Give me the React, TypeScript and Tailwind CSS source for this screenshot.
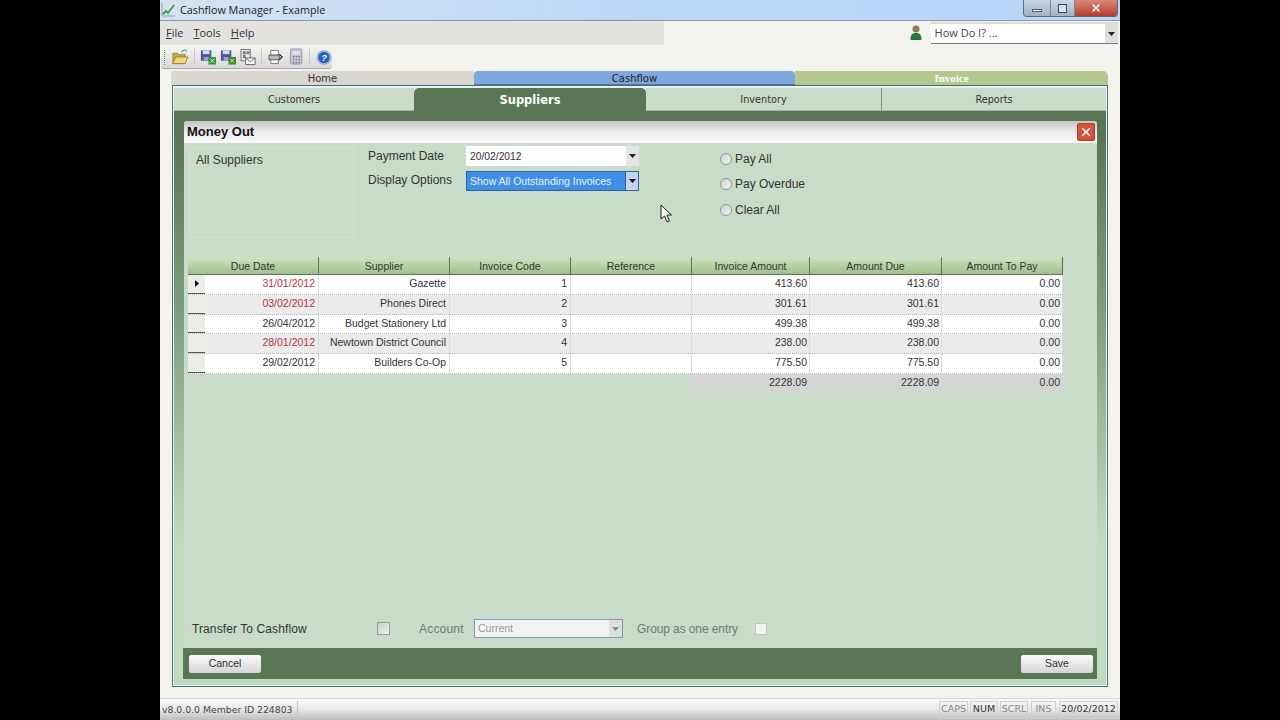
import { X } from "lucide-react";

const rows = [
  { due: "31/01/2012", late: true, supplier: "Gazette", code: "1", amount: "413.60" },
  { due: "03/02/2012", late: true, supplier: "Phones Direct", code: "2", amount: "301.61" },
  { due: "26/04/2012", late: false, supplier: "Budget Stationery Ltd", code: "3", amount: "499.38" },
  { due: "28/01/2012", late: true, supplier: "Newtown District Council", code: "4", amount: "238.00" },
  { due: "29/02/2012", late: false, supplier: "Builders Co-Op", code: "5", amount: "775.50" },
];

const headers = [
  { label: "Due Date", w: "w-[131px]" },
  { label: "Supplier", w: "w-[131px]" },
  { label: "Invoice Code", w: "w-[121px]" },
  { label: "Reference", w: "w-[121px]" },
  { label: "Invoice Amount", w: "w-[118px]" },
  { label: "Amount Due", w: "w-[132px]" },
  { label: "Amount To Pay", w: "w-[121px]" },
];

function Caret({ color = "#222" }: { color?: string }) {
  return (
    <svg width="7" height="4" viewBox="0 0 7 4">
      <path d="M0 0h7L3.5 4z" fill={color} />
    </svg>
  );
}

function Cell({ w, children, tone = "text-[#333]", pad = "pr-[2px]" }: { w: string; children?: React.ReactNode; tone?: string; pad?: string }) {
  return (
    <div className={`${w} ${pad} h-full shrink-0 border-r border-[#dcdcdc] pb-[1px] flex items-center justify-end text-[10.5px] ${tone}`}>
      {children}
    </div>
  );
}

function ToolbarIcons() {
  return (
    <>
      <svg width="20" height="18" viewBox="0 0 20 18" className="ml-[6px]">
        <path d="M2 5h5l1.500 1.500H15V16H2z" fill="#c9a94a" stroke="#8a7430" strokeWidth=".8" />
        <path d="M2 16l3-7h13l-3 7z" fill="#f0d57c" stroke="#8a7430" strokeWidth=".8" />
        <path d="M11 4c2-3 4-3 6-1" fill="none" stroke="#5a7fb0" strokeWidth="1.200" />
      </svg>
      <div className="w-px h-[18px] bg-[#c8c8c8] mx-[4px]" />
      {["#2f9a3c", "#3c8a2c"].map((c, i) => (
        <svg key={c} width="18" height="18" viewBox="0 0 18 18" className={i ? "ml-[3px]" : "ml-[1px]"}>
          <path d="M1 2h11v11H1z" fill="#50559a" />
          <path d="M3 2h7v4H3z" fill="#d8dcec" />
          <path d="M4 9h5v4H4z" fill="#9ea3c8" />
          <path d="M9 9h8v8H9z" fill={c} />
          <path d="M11 11l4 4M15 11l-4 4" stroke="#d8f0c8" strokeWidth="1" />
        </svg>
      ))}
      <svg width="17" height="18" viewBox="0 0 17 18" className="ml-[3px]">
        <path d="M1 1h10v12H1z" fill="#e8e8e4" stroke="#555" strokeWidth=".8" />
        <path d="M3 3h3v3H3zM7 3h3v3H7zM3 7h3v3H3z" fill="#777" />
        <path d="M6 10h10v7H6z" fill="#fff" stroke="#444" strokeWidth=".8" />
        <path d="M6 10l5 4 5-4" fill="none" stroke="#444" strokeWidth=".8" />
      </svg>
      <div className="w-px h-[18px] bg-[#c8c8c8] mx-[5px]" />
      <svg width="16" height="16" viewBox="0 0 16 16" className="ml-[1px]">
        <path d="M3 1h8v5H3z" fill="#fff" stroke="#555" strokeWidth=".8" />
        <path d="M1 6h11v5H1z" fill="#b8b8b8" stroke="#444" strokeWidth=".8" />
        <path d="M3 11h8v4H3z" fill="#fff" stroke="#555" strokeWidth=".8" />
        <path d="M12 5l3 3-3 3" fill="none" stroke="#222" strokeWidth="1.200" />
      </svg>
      <svg width="14" height="18" viewBox="0 0 14 18" className="ml-[7px]">
        <rect x=".5" y=".5" width="12" height="16" rx="1.500" fill="#c4cbd6" stroke="#8d96a6" />
        <path d="M3 3h7v3H3z" fill="#e6eaf0" />
        <path d="M3 8h1.500v1.500H3zM6 8h1.500v1.500H6zM9 8h1.500v1.500H9zM3 11h1.500v1.500H3zM6 11h1.500v1.500H6zM9 11h1.500v1.500H9zM3 14h1.500v1.500H3zM6 14h1.500v1.500H6zM9 14h1.500v1.500H9z" fill="#69717f" />
      </svg>
      <div className="w-px h-[18px] bg-[#c8c8c8] mx-[6px]" />
      <svg width="17" height="17" viewBox="0 0 17 17">
        <circle cx="8.500" cy="8.500" r="8" fill="#9fb6da" />
        <circle cx="8.500" cy="8.500" r="6" fill="#2a62c2" />
        <text x="8.500" y="12" textAnchor="middle" fontSize="10" fontWeight="700" fontStyle="italic" fill="#fff" fontFamily="Liberation Sans, sans-serif">?</text>
      </svg>
    </>
  );
}

export default function App() {
  return (
    <div className="w-[1280px] h-[720px] bg-black flex justify-center overflow-hidden relative font-['Liberation_Sans',sans-serif]">
      <div className="w-[960px] h-[720px] bg-[#f3f3ee] flex flex-col">
        {/* title bar */}
        <div className="h-[21px] shrink-0 bg-gradient-to-r from-[#d3e3f3] via-[#bcd8f8] to-[#b7d5f8] border-b border-[#8b98a5] flex items-center relative">
          <svg width="15" height="15" viewBox="0 0 15 15" className="ml-[1px] mb-[2px]">
            <path d="M1 1v13h13" fill="none" stroke="#9aa09a" strokeWidth="1" />
            <path d="M2 12l3-3 2 2 6-8" fill="none" stroke="#3d9a3d" strokeWidth="1.800" />
          </svg>
          <span className="ml-[4px] text-[10.8px] text-[#222] font-['Open_Sans',sans-serif]">Cashflow Manager - Example</span>
          <div className="absolute right-[2px] top-0 h-[17px] w-[95px] flex border border-t-0 border-[#5f6a75] rounded-b-[4px] overflow-hidden">
            <div className="w-[26px] bg-gradient-to-b from-[#c8d8e8] to-[#9db0c4] flex items-center justify-center">
              <div className="w-[10px] h-[3px] border border-[#555] bg-white mt-[5px]" />
            </div>
            <div className="w-[25px] border-x border-[#7c8894] bg-gradient-to-b from-[#c8d8e8] to-[#9db0c4] flex items-center justify-center">
              <div className="w-[9px] h-[9px] border border-[#444] bg-[#d8e2ec]" />
            </div>
            <div className="flex-1 bg-gradient-to-b from-[#d88878] to-[#b8382c] flex items-center justify-center">
              <X size={12} strokeWidth={3.500} className="text-[#f4f4f4]" />
            </div>
          </div>
        </div>

        {/* menu strip */}
        <div className="h-[24px] shrink-0 flex items-center">
          <div className="w-[505px] h-full bg-[#e2e2e0] flex items-center gap-[10px] pl-[6px] text-[11px] text-[#333] font-['Open_Sans',sans-serif]">
            <span><u>F</u>ile</span>
            <span><u>T</u>ools</span>
            <span><u>H</u>elp</span>
          </div>
          <svg width="12" height="16" viewBox="0 0 12 16" className="ml-[246px]">
            <circle cx="6" cy="4" r="3.500" fill="#8a7a60" />
            <path d="M0.500 15c0-6 2-7 5.500-7s5.500 1 5.500 7z" fill="#217a3c" />
          </svg>
          <div className="ml-[9px] w-[188px] h-[22px] bg-white border-t-2 border-[#dcdcdc] border-b border-b-[#777] flex items-center justify-between text-[11px] text-[#444] font-['Open_Sans',sans-serif]">
            <span className="pl-[4px]">How Do I? ...</span>
            <div className="w-[13px] h-full bg-[#dedede] flex items-center justify-center"><Caret /></div>
          </div>
          <div className="w-[2px]" />
        </div>

        {/* toolbar */}
        <div className="h-[26px] shrink-0 flex items-start">
          <div className="w-[171px] h-[24px] ml-[1px] pt-[1px] rounded-b-[3px] bg-gradient-to-b from-[#f5f5f0] to-[#d8d8d8] border-b border-[#a8a8a8] flex items-center pl-[3px]">
            <div className="w-px h-[15px] border-l border-dotted border-[#777]" />
            <ToolbarIcons />
          </div>
        </div>

        {/* top tabs */}
        <div className="h-[14px] shrink-0 ml-[11px] w-[937px] flex text-[10px] leading-[13px] text-center font-['DejaVu_Sans',sans-serif]">
          <div className="w-[303px] pt-[1px] bg-[#d9d5cf] rounded-tl-[4px] text-[#333]">Home</div>
          <div className="w-[321px] pt-[1px] bg-[#7ea8dd] rounded-t-[4px] border-b border-[#50739f] text-[#222]">Cashflow</div>
          <div className="w-[313px] bg-[#b4c78f] rounded-tr-[5px] text-white font-bold font-['Liberation_Serif',serif] text-[11px] leading-[14px]">Invoice</div>
        </div>

        {/* main panel */}
        <div className="h-[602px] shrink-0 ml-[12px] w-[936px] bg-[#e4f0f4] border border-[#4f6f78] p-[1px] flex flex-col">
          <div className="h-[23px] shrink-0 mt-[1px] flex text-[9.7px] text-[#333] font-['DejaVu_Sans',sans-serif]">
            <div className="w-[240px] pt-[3px] bg-[#c9dbc9] border-b border-[#9fb8b0] flex items-center justify-center">Customers</div>
            <div className="w-[232px] pt-[2px] bg-[#5a7755] rounded-t-[5px] flex items-center justify-center text-white font-bold text-[11.5px]">Suppliers</div>
            <div className="w-[236px] pt-[3px] bg-[#c9dbc9] border-b border-[#9fb8b0] border-r border-r-[#7e9a88] flex items-center justify-center">Inventory</div>
            <div className="flex-1 pt-[3px] bg-[#c9dbc9] border-b border-[#9fb8b0] flex items-center justify-center">Reports</div>
          </div>

          <div className="flex-1 bg-gradient-to-b from-[#5a7755] from-[5%] via-[#7f9c7c] via-[35%] to-[#bfdcbf] to-[75%] pl-[10px] pr-[9px] pt-[10px] pb-[6px] flex flex-col">
            <div className="h-[22px] shrink-0 rounded-t-[2px] bg-gradient-to-b from-[#c3c3c8] via-[#ececee] to-[#fafafa] flex items-center justify-between pl-[3px] pr-[2px]">
              <span className="text-[13px] leading-[16px] font-bold text-[#111]">Money Out</span>
              <div className="w-[18px] h-[18px] rounded-[2px] bg-[#d4553a] border border-[#a8402c] flex items-center justify-center">
                <X size={14} strokeWidth={2.500} className="text-white" />
              </div>
            </div>

            <div className="flex-1 bg-[#c9dbc9] flex flex-col">
              {/* filters */}
              <div className="flex h-[114px] shrink-0 pt-[5px] pl-[5px] text-[12px] text-[#333]">
                <div className="w-[165px] h-[90px] border border-[#d4e2d4] pl-[6px] pt-[2px]">All Suppliers</div>
                <div className="ml-[14px] w-[98px] flex flex-col pt-[1px] gap-[9px]">
                  <span className="leading-[15px]">Payment Date</span>
                  <span className="leading-[15px]">Display Options</span>
                </div>
                <div className="w-[173px] flex flex-col gap-[5px] mt-[-2px]">
                  <div className="h-[20px] bg-white flex items-center justify-between text-[10.3px] pl-[4px]">
                    <span className="pt-[1px]">20/02/2012</span>
                    <div className="w-[13px] h-full bg-[#e4e4e4] flex items-center justify-center"><Caret /></div>
                  </div>
                  <div className="h-[20px] bg-[#3f8fe6] border border-[#33619c] flex items-center justify-between text-[10.5px] text-[#e8f2fc] pl-[3px]">
                    <span className="pt-[2px]">Show All Outstanding Invoices</span>
                    <div className="w-[13px] h-full bg-[#c4d4f0] border-l border-[#33619c] flex items-center justify-center"><Caret color="#111" /></div>
                  </div>
                </div>
                <div className="ml-[81px] flex flex-col gap-[10px] pt-[3px]">
                  {["Pay All", "Pay Overdue", "Clear All"].map((t) => (
                    <div key={t} className="flex items-center gap-[3px] h-[15.5px]">
                      <div className="w-[12px] h-[12px] rounded-full border border-[#8b9a96] bg-gradient-to-br from-[#c9d2ce] to-[#f4f6f4]" />
                      <span>{t}</span>
                    </div>
                  ))}
                </div>
              </div>

              {/* grid */}
              <div className="ml-[4px] flex flex-col w-[875px]">
                <div className="flex h-[18px] shrink-0">
                  {headers.map((h) => (
                    <div
                      key={h.label}
                      className={`${h.w} shrink-0 pt-[2px] bg-gradient-to-b from-[#d0e4c2] to-[#9dc08c] border-b border-[#5a7755] border-r border-r-[#5a7755] flex items-center justify-center text-[10.5px] text-[#333]`}
                    >
                      {h.label}
                    </div>
                  ))}
                </div>
                {rows.map((r, i) => (
                  <div key={r.code} className={`flex h-[19.75px] shrink-0 border-b border-dotted border-[#b5b5b5] ${i % 2 ? "bg-[#ebebeb]" : "bg-white"}`}>
                    <div className="w-[17px] shrink-0 h-full bg-[#ecece9] border-b border-[#555] flex items-center justify-center">
                      {i === 0 && (
                        <svg width="4" height="7" viewBox="0 0 4 7"><path d="M0 0l4 3.500L0 7z" fill="#111" /></svg>
                      )}
                    </div>
                    <Cell w="w-[114px]" pad="pr-[3px]" tone={r.late ? "text-[#b5343c]" : "text-[#333]"}>{r.due}</Cell>
                    <Cell w="w-[131px]" pad="pr-[3px]">{r.supplier}</Cell>
                    <Cell w="w-[121px]" pad="pr-[3px]">{r.code}</Cell>
                    <Cell w="w-[121px]" />
                    <Cell w="w-[118px]">{r.amount}</Cell>
                    <Cell w="w-[132px]">{r.amount}</Cell>
                    <Cell w="w-[121px]">0.00</Cell>
                  </div>
                ))}
                <div className="flex h-[17px] shrink-0 ml-[503px] pt-[1px] bg-[#d5d5d5] text-[10.5px] text-[#333]">
                  <div className="w-[118px] pr-[2px] flex items-center justify-end">2228.09</div>
                  <div className="w-[132px] pr-[2px] flex items-center justify-end">2228.09</div>
                  <div className="w-[121px] pr-[2px] flex items-center justify-end">0.00</div>
                </div>
              </div>

              {/* transfer row */}
              <div className="mt-auto mb-[10px] h-[19px] flex items-center pl-[8px] text-[12px]">
                <span className="w-[185px] text-[#333] tracking-[0.1px]">Transfer To Cashflow</span>
                <div className="w-[13px] h-[13px] border border-[#999] bg-gradient-to-br from-[#c8cfcc] to-[#eef0ee]" />
                <span className="ml-[29px] w-[55px] text-[#777] tracking-[0.2px]">Account</span>
                <div className="w-[149px] h-[19px] bg-[#f1f3f2] border border-[#7f9bb0] flex items-center justify-between text-[10.5px] text-[#999] pl-[3px]">
                  <span className="pt-[1px]">Current</span>
                  <div className="w-[13px] h-full bg-[#dde0df] flex items-center justify-center"><Caret color="#888" /></div>
                </div>
                <span className="ml-[14px] w-[118px] text-[#777] tracking-[-0.1px]">Group as one entry</span>
                <div className="w-[12px] h-[12px] border border-[#c4c4c4] bg-[#f1f3f2]" />
              </div>
            </div>

            {/* footer */}
            <div className="h-[31px] shrink-0 bg-[#5a7755] ml-[-1px] flex items-center justify-between pl-[6px] pr-[4px]">
              {["Cancel", "Save"].map((b) => (
                <button key={b} className="w-[72px] h-[18px] rounded-[2px] bg-gradient-to-b from-[#fbfbfb] to-[#d4d4d4] text-[10.5px] text-[#333] flex items-center justify-center">
                  {b}
                </button>
              ))}
            </div>
          </div>
        </div>

        {/* status bar */}
        <div className="mt-auto h-[22px] shrink-0 bg-gradient-to-b from-[#f8f8f8] via-[#e8e8e8] to-[#bdbdbd] border-t border-[#d6d6d6] flex items-center text-[9.5px] font-['DejaVu_Sans',sans-serif] pl-[2px]">
          <div className="w-[136px] h-[18px] border-r border-[#c4c4c4] flex items-center text-[#444] text-[9.3px] whitespace-nowrap overflow-hidden">v8.0.0.0 Member ID 224803</div>
          <div className="flex-1" />
          <div className="w-[29px] h-[18px] border border-[#d0d0d0] flex items-center justify-center text-[#888] mr-[2px]">CAPS</div>
          <div className="w-[28px] h-[18px] border border-[#d0d0d0] flex items-center justify-center text-[#333] mr-[2px]">NUM</div>
          <div className="w-[28px] h-[18px] border border-[#d0d0d0] flex items-center justify-center text-[#888] mr-[3px]">SCRL</div>
          <div className="w-[25px] h-[18px] border border-[#d0d0d0] flex items-center justify-center text-[#888] mr-[3px]">INS</div>
          <div className="w-[59px] h-[18px] border border-[#d0d0d0] flex items-center justify-center text-[#333] mr-[2px]">20/02/2012</div>
        </div>
      </div>

      {/* mouse pointer */}
      <svg width="13" height="19" viewBox="0 0 13 19" className="absolute left-[660px] top-[204px]">
        <path d="M1 1v14l3.500-3 2.500 6 2.500-1-2.500-6h4.500z" fill="#f6f8f6" stroke="#222" strokeWidth="1" />
      </svg>
    </div>
  );
}
